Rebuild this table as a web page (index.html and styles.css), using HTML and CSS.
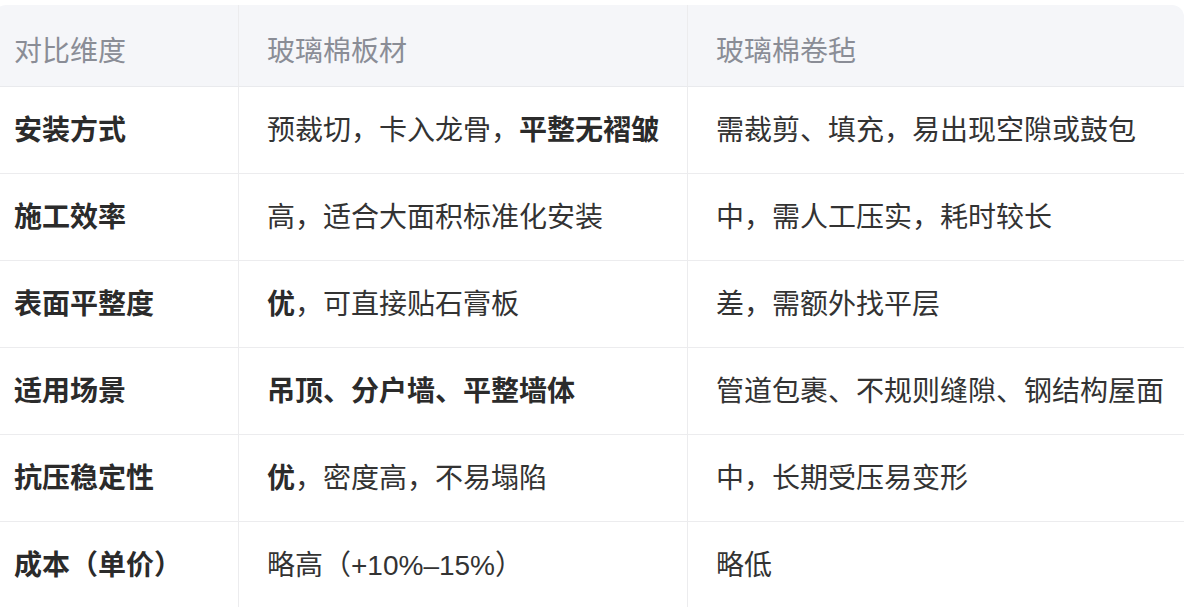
FILE: index.html
```html
<!DOCTYPE html>
<html lang="zh-CN">
<head>
<meta charset="utf-8">
<title>玻璃棉板材 vs 卷毡</title>
<link rel="stylesheet" href="styles.css">
</head>
<body>
<div class="wrap">
<table class="cmp">
<colgroup><col class="c1"><col class="c2"><col class="c3"></colgroup>
<thead>
<tr><th>对比维度</th><th>玻璃棉板材</th><th>玻璃棉卷毡</th></tr>
</thead>
<tbody>
<tr><td>安装方式</td><td>预裁切，卡入龙骨，<b>平整无褶皱</b></td><td>需裁剪、填充，易出现空隙或鼓包</td></tr>
<tr><td>施工效率</td><td>高，适合大面积标准化安装</td><td>中，需人工压实，耗时较长</td></tr>
<tr><td>表面平整度</td><td><b>优</b>，可直接贴石膏板</td><td>差，需额外找平层</td></tr>
<tr><td>适用场景</td><td><b>吊顶、分户墙、平整墙体</b></td><td>管道包裹、不规则缝隙、钢结构屋面</td></tr>
<tr><td>抗压稳定性</td><td><b>优</b>，密度高，不易塌陷</td><td>中，长期受压易变形</td></tr>
<tr><td>成本（单价）</td><td>略高（+10%–15%）</td><td>略低</td></tr>
</tbody>
</table>
</div>
</body>
</html>
```

FILE: styles.css
```css
html, body {
  margin: 0;
  padding: 0;
  background: #ffffff;
  overflow: hidden;
}
body {
  padding-top: 5px;
  font-family: "Liberation Sans", "Noto Sans CJK SC", sans-serif;
  color: #333333;
}
.wrap {
  margin-left: -6px;
  width: 1190px;
  border-radius: 12px 12px 0 0;
  overflow: hidden;
}
.cmp {
  width: 100%;
  border-collapse: separate;
  border-spacing: 0;
  table-layout: fixed;
  font-size: 28px;
  line-height: 40px;
  text-spacing-trim: space-all;
}
.c1 { width: 244px; }
.c2 { width: 449px; }
.c3 { width: auto; }
.cmp th {
  background: #f5f6f9;
  color: #8a8d96;
  font-weight: 400;
  text-align: left;
  padding: 27px 0 14px 28px;
  border-bottom: 1px solid #e9eaed;
}
.cmp td {
  padding: 24px 0 22px 28px;
  border-bottom: 1px solid #ececee;
  white-space: nowrap;
  color: #333333;
}
.cmp th:first-child,
.cmp td:first-child {
  padding-left: 20px;
}
.cmp td:first-child {
  font-weight: 700;
  color: #2b2b2b;
}
.cmp th + th,
.cmp td + td {
  border-left: 1px solid #ececee;
}
.cmp b {
  font-weight: 700;
  color: #2b2b2b;
}
```
